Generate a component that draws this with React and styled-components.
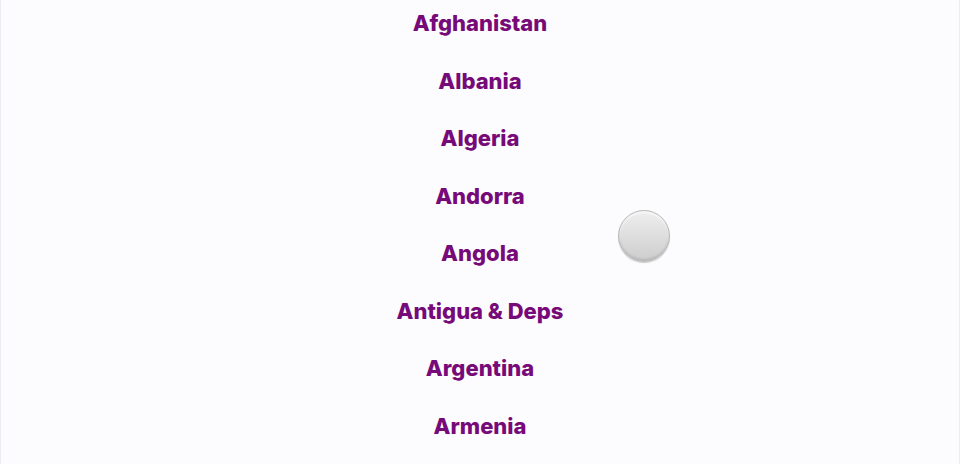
import React from "react";
import styled, { createGlobalStyle } from "styled-components";

const GlobalStyle = createGlobalStyle`
  html, body {
    margin: 0;
    padding: 0;
    background: #fcfbfd;
  }
  body {
    font-family: Inter, "Noto Sans", sans-serif;
  }
`;

const Page = styled.div`
  position: relative;
  width: 960px;
  height: 464px;
  box-sizing: border-box;
  border-left: 1px solid #ecebef;
  border-right: 1px solid #ecebef;
  background: #fcfbfd;
  overflow: hidden;
`;

const List = styled.ul`
  list-style: none;
  margin: 0;
  padding: 0;
  display: flex;
  flex-direction: column;
  align-items: center;
`;

const Country = styled.li`
  height: 57.5px;
  line-height: 47px;
  font-size: 22px;
  font-weight: 800;
  color: #770a79;
  text-align: center;
`;

const Knob = styled.div`
  position: absolute;
  left: 617px;
  top: 210px;
  width: 52px;
  height: 52px;
  box-sizing: border-box;
  border-radius: 50%;
  border: 1px solid #b9b9b9;
  background: linear-gradient(180deg, #eeeeee 0%, #dcdcdc 55%, #cdcdcd 100%);
  box-shadow: 0 1px 1px rgba(0, 0, 0, 0.2), inset 0 -2px 2px rgba(0, 0, 0, 0.1),
    inset 0 2px 2px rgba(255, 255, 255, 0.6);
`;

const countries = [
  "Afghanistan",
  "Albania",
  "Algeria",
  "Andorra",
  "Angola",
  "Antigua & Deps",
  "Argentina",
  "Armenia",
];

export default function App() {
  return (
    <>
      <GlobalStyle />
      <Page>
        <List>
          {countries.map((name) => (
            <Country key={name}>{name}</Country>
          ))}
        </List>
        <Knob />
      </Page>
    </>
  );
}
